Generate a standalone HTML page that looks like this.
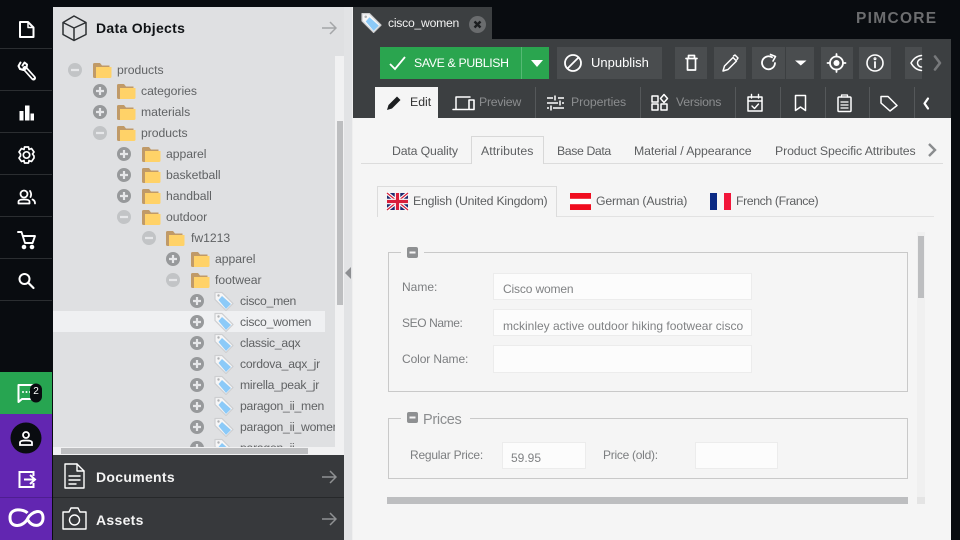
<!DOCTYPE html>
<html><head><meta charset="utf-8"><style>
html,body{margin:0;padding:0;width:960px;height:540px;overflow:hidden;background:#090c10;font-family:"Liberation Sans",sans-serif}
.a{position:absolute}
.t{position:absolute;white-space:nowrap;line-height:20px;height:20px;font-size:12px}
.r{color:#606264;font-size:12.2px;letter-spacing:-.03px}
.lf{letter-spacing:-.24px}
svg{position:absolute;overflow:visible}
.si{fill:none;stroke:#fff;stroke-width:2;stroke-linejoin:round;stroke-linecap:round}
.g{color:#8b8d8f}
.btn{position:absolute;top:47px;height:32px;background:#4a4d4f}
.dv{position:absolute;top:87px;width:1px;height:31px;background:#55585a}
.tb{fill:none;stroke:#fff;stroke-width:1.8;stroke-linecap:round;stroke-linejoin:round}
.c{color:#5d5f61;font-size:12.3px}
.l{color:#7c7e80;font-size:12px}
.inp{position:absolute;background:#fcfcfc;border:1px solid #ececec;box-sizing:border-box}
.v{color:#808284;font-size:12px}
</style></head><body>
<svg width="0" height="0" style="position:absolute"><defs>
<symbol id="f" viewBox="0 0 19 17" overflow="visible"><path d="M0 2.5Q0 1 1.5 1H7L9 3.5H16.5V6H3.5V16H1.5Q0 16 0 14.500Z" fill="#c09a68"/><path d="M3 5H18.500V14.500Q18.500 16 17 16H3Z" fill="#ffd268"/></symbol>
<symbol id="p" viewBox="0 0 14 14"><circle cx="7" cy="7" r="7" fill="#97999b"/><path d="M3 7H11M7 3V11" stroke="#e6e7e9" stroke-width="2.200"/></symbol>
<symbol id="m" viewBox="0 0 14 14"><circle cx="7" cy="7" r="7" fill="#c2c4c6"/><path d="M3 7H11" stroke="#e6e7e9" stroke-width="2.200"/></symbol>
<symbol id="g" viewBox="0 0 20 20"><path d="M1 1.500H8L19 12.500 12 19.500 1 8.500Z" fill="#f6f6f7" stroke="#cdced0" stroke-width="1.200" stroke-linejoin="round"/><path d="M8 5L17 13 12 18 4.500 9Z" fill="#8ccaf8"/><circle cx="4.500" cy="4.500" r="1.200" fill="#b0b2b4"/></symbol>
<symbol id="arr" viewBox="0 0 15 14"><path d="M0 7H14M8 1L14 7 8 13" fill="none" stroke="currentColor" stroke-width="1.500"/></symbol>
</defs></svg>

<!-- sidebar -->
<div class="a" style="left:0;top:0;width:52px;height:372px;background:#090c10"></div>
<div class="a" style="left:0;top:48px;width:52px;height:1px;background:#2b2e31"></div>
<div class="a" style="left:0;top:90px;width:52px;height:1px;background:#2b2e31"></div>
<div class="a" style="left:0;top:132px;width:52px;height:1px;background:#2b2e31"></div>
<div class="a" style="left:0;top:174px;width:52px;height:1px;background:#2b2e31"></div>
<div class="a" style="left:0;top:216px;width:52px;height:1px;background:#2b2e31"></div>
<div class="a" style="left:0;top:258px;width:52px;height:1px;background:#2b2e31"></div>
<div class="a" style="left:0;top:300px;width:52px;height:1px;background:#2b2e31"></div>
<svg class="si" style="left:0;top:0" width="53" height="300">
<path d="M20 22H28L33.500 27.500V37H20Z"/><path d="M28 22V27.500H33.500" stroke-width="1.500"/>
<path d="M25 68.500L33.500 78" stroke-width="5"/><path d="M25 68.500L33.500 78" stroke="#090c10" stroke-width="1.600" stroke-linecap="butt"/>
<path d="M20.500 62.500L18.500 66 20 69 23.500 70 26.500 68 27 64.500 24.500 62.500 22.500 65.500" stroke-width="2"/>
<rect x="19.500" y="111" width="4" height="9.500" fill="#fff" stroke="none"/><rect x="25" y="105.500" width="4.500" height="15" fill="#fff" stroke="none"/><rect x="30.500" y="113.500" width="3.500" height="7" fill="#fff" stroke="none"/>
<circle cx="26.500" cy="155" r="3.200" stroke-width="1.700"/><path d="M24.500 147H28.500L29 149.500 31.500 148.500 34 152 32.500 154 34 156 34 158 31.500 161.500 29 160.500 28.500 163H24.500L24 160.500 21.500 161.500 19 158 20.500 156V154L19 152 21.500 148.500 24 149.500Z" stroke-width="1.700"/>
<circle cx="24" cy="194" r="3.500" stroke-width="1.800"/><path d="M18.500 203.500V201.500Q18.500 199.500 24 199.500 29.500 199.500 29.500 201.500V203.500Z" stroke-width="1.800"/><path d="M30 191Q32 194 30.500 197M32.500 199.500Q35 200.500 35 203.500" stroke-width="1.800"/>
<path d="M18 232H21.500L25 243H32.500L35 236H23" stroke-width="1.900"/><circle cx="24" cy="247" r="1.300" fill="#fff"/><circle cx="32" cy="247" r="1.300" fill="#fff"/>
<circle cx="24.500" cy="279" r="5" stroke-width="2"/><path d="M28.500 283L33.500 288" stroke-width="2.200"/>
</svg>
<div class="a" style="left:0;top:372px;width:52px;height:42px;background:#27a551"></div>
<div class="a" style="left:0;top:414px;width:52px;height:126px;background:#6226b1"></div>
<div class="a" style="left:0;top:497px;width:52px;height:1px;background:#4f1e91"></div>
<svg style="left:0;top:372px" width="52" height="42"><path d="M18.500 13H34.500V27H22L18.500 30Z" fill="none" stroke="#fff" stroke-width="2" stroke-linejoin="round"/><circle cx="23" cy="20" r="1" fill="#fff"/><circle cx="26.500" cy="20" r="1" fill="#fff"/><circle cx="30" cy="20" r="1" fill="#fff"/><rect x="30" y="11.500" width="12" height="19" rx="6" fill="#090c10"/></svg>
<div class="t" style="left:30px;top:382px;width:12px;text-align:center;color:#fff;font-size:10px">2</div>
<svg style="left:0;top:414px" width="52" height="126">
<circle cx="26" cy="24" r="15.500" fill="#090c10"/>
<circle cx="26" cy="21" r="3" fill="none" stroke="#fff" stroke-width="1.800"/><path d="M20 31V28.500Q20 26.500 26 26.500 32 26.500 32 28.500V31Z" fill="none" stroke="#fff" stroke-width="1.800"/>
<path d="M33.500 62V58H19.500V73H33.500V69" fill="none" stroke="#fff" stroke-width="2"/><path d="M24 65.500H34.500M30 61L35 65.500 30 70" fill="none" stroke="#fff" stroke-width="2"/>
<path d="M27.500 99C24 95 9.500 93 10 104 10 115 24 113 28 104 31 98 43 93 43 104 43 113 32 114 28 106" fill="none" stroke="#fff" stroke-width="3"/>
</svg>

<!-- left panel -->
<div class="a" style="left:53px;top:7px;width:291px;height:448px;background:#dfe0e2"></div>
<div class="a" style="left:344px;top:7px;width:8px;height:533px;background:#e2e3e5"></div>
<div class="a" style="left:352px;top:7px;width:1px;height:533px;background:#efefef"></div>
<svg style="left:344px;top:266px" width="9" height="14"><path d="M7 1V13L1 7Z" fill="#8d8f92"/></svg>
<svg style="left:62px;top:15px" width="26" height="26" fill="none" stroke="#2d3033" stroke-width="1.500" stroke-linejoin="round"><path d="M12 1L24 7.500V19.500L12 25.500 1 19.500V7.500Z"/><path d="M1 7.500L12 13 24 7.500M12 13V25.500"/></svg>
<div class="t" style="left:96px;top:18px;font-size:14px;font-weight:700;color:#101316;letter-spacing:.3px">Data Objects</div>
<svg style="left:322px;top:21px;color:#a4a6a8" width="15" height="14"><use href="#arr"/></svg>

<div class="a" style="left:53px;top:311px;width:272px;height:21px;background:#eff0f2"></div>
<div class="a" style="left:53px;top:56px;width:282px;height:391px;overflow:hidden">
<svg style="left:15px;top:7px" width="14" height="14"><use href="#m"/></svg><svg style="left:40px;top:6px" width="19" height="17"><use href="#f"/></svg><div class="t r" style="left:64px;top:4px">products</div>
<svg style="left:40px;top:28px" width="14" height="14"><use href="#p"/></svg><svg style="left:64px;top:27px" width="19" height="17"><use href="#f"/></svg><div class="t r" style="left:88px;top:25px">categories</div>
<svg style="left:40px;top:49px" width="14" height="14"><use href="#p"/></svg><svg style="left:64px;top:48px" width="19" height="17"><use href="#f"/></svg><div class="t r" style="left:88px;top:46px">materials</div>
<svg style="left:40px;top:70px" width="14" height="14"><use href="#m"/></svg><svg style="left:64px;top:69px" width="19" height="17"><use href="#f"/></svg><div class="t r" style="left:88px;top:67px">products</div>
<svg style="left:64px;top:91px" width="14" height="14"><use href="#p"/></svg><svg style="left:89px;top:90px" width="19" height="17"><use href="#f"/></svg><div class="t r" style="left:113px;top:88px">apparel</div>
<svg style="left:64px;top:112px" width="14" height="14"><use href="#p"/></svg><svg style="left:89px;top:111px" width="19" height="17"><use href="#f"/></svg><div class="t r" style="left:113px;top:109px">basketball</div>
<svg style="left:64px;top:133px" width="14" height="14"><use href="#p"/></svg><svg style="left:89px;top:132px" width="19" height="17"><use href="#f"/></svg><div class="t r" style="left:113px;top:130px">handball</div>
<svg style="left:64px;top:154px" width="14" height="14"><use href="#m"/></svg><svg style="left:89px;top:153px" width="19" height="17"><use href="#f"/></svg><div class="t r" style="left:113px;top:151px">outdoor</div>
<svg style="left:89px;top:175px" width="14" height="14"><use href="#m"/></svg><svg style="left:113px;top:174px" width="19" height="17"><use href="#f"/></svg><div class="t r" style="left:138px;top:172px">fw1213</div>
<svg style="left:113px;top:196px" width="14" height="14"><use href="#p"/></svg><svg style="left:138px;top:195px" width="19" height="17"><use href="#f"/></svg><div class="t r" style="left:162px;top:193px">apparel</div>
<svg style="left:113px;top:217px" width="14" height="14"><use href="#m"/></svg><svg style="left:138px;top:216px" width="19" height="17"><use href="#f"/></svg><div class="t r" style="left:162px;top:214px">footwear</div>
<svg style="left:137px;top:238px" width="14" height="14"><use href="#p"/></svg><svg style="left:161px;top:235px" width="20" height="20"><use href="#g"/></svg><div class="t r lf" style="left:187px;top:235px">cisco_men</div>
<svg style="left:137px;top:259px" width="14" height="14"><use href="#p"/></svg><svg style="left:161px;top:256px" width="20" height="20"><use href="#g"/></svg><div class="t r lf" style="left:187px;top:256px">cisco_women</div>
<svg style="left:137px;top:280px" width="14" height="14"><use href="#p"/></svg><svg style="left:161px;top:277px" width="20" height="20"><use href="#g"/></svg><div class="t r lf" style="left:187px;top:277px">classic_aqx</div>
<svg style="left:137px;top:301px" width="14" height="14"><use href="#p"/></svg><svg style="left:161px;top:298px" width="20" height="20"><use href="#g"/></svg><div class="t r lf" style="left:187px;top:298px">cordova_aqx_jr</div>
<svg style="left:137px;top:322px" width="14" height="14"><use href="#p"/></svg><svg style="left:161px;top:319px" width="20" height="20"><use href="#g"/></svg><div class="t r lf" style="left:187px;top:319px">mirella_peak_jr</div>
<svg style="left:137px;top:343px" width="14" height="14"><use href="#p"/></svg><svg style="left:161px;top:340px" width="20" height="20"><use href="#g"/></svg><div class="t r lf" style="left:187px;top:340px">paragon_ii_men</div>
<svg style="left:137px;top:364px" width="14" height="14"><use href="#p"/></svg><svg style="left:161px;top:361px" width="20" height="20"><use href="#g"/></svg><div class="t r lf" style="left:187px;top:361px">paragon_ii_women</div>
<svg style="left:137px;top:385px" width="14" height="14"><use href="#p"/></svg><svg style="left:161px;top:382px" width="20" height="20"><use href="#g"/></svg><div class="t r lf" style="left:187px;top:382px">paragon_ii</div>
</div>
<div class="a" style="left:335px;top:56px;width:9px;height:391px;background:#f1f1f2"></div>
<div class="a" style="left:337px;top:121px;width:6px;height:184px;background:#bdbec0"></div>
<div class="a" style="left:53px;top:447px;width:291px;height:8px;background:#f1f1f2"></div>
<div class="a" style="left:61px;top:448px;width:247px;height:6px;background:#bdbec0"></div>

<div class="a" style="left:53px;top:455px;width:291px;height:85px;background:#37393c"></div>
<div class="a" style="left:53px;top:497px;width:291px;height:1px;background:#26282a"></div>
<svg style="left:64px;top:463px" width="21" height="26" fill="none" stroke="#fff" stroke-width="1.400" stroke-linejoin="round" stroke-linecap="round"><path d="M1 1H13L20 8V25H1Z"/><path d="M13 1V8H20M5 13H16M5 17H16M5 21H12"/></svg>
<div class="t" style="left:96px;top:467px;font-size:14px;font-weight:700;color:#f4f4f4;letter-spacing:.3px">Documents</div>
<svg style="left:322px;top:470px;color:#8f9193" width="15" height="14"><use href="#arr"/></svg>
<svg style="left:62px;top:507px" width="25" height="23" fill="none" stroke="#fff" stroke-width="1.400" stroke-linejoin="round"><path d="M1 5H7L9 1H16L18 5H24V22H1Z"/><circle cx="12.500" cy="13" r="5"/></svg>
<div class="t" style="left:96px;top:510px;font-size:14px;font-weight:700;color:#f4f4f4;letter-spacing:.3px">Assets</div>
<svg style="left:322px;top:512px;color:#8f9193" width="15" height="14"><use href="#arr"/></svg>

<!-- top -->
<div class="a" style="left:353px;top:7px;width:139px;height:32px;background:#3c3f41"></div>
<svg style="left:361px;top:12px" width="21" height="21"><use href="#g"/></svg>
<div class="t" style="left:388px;top:13px;color:#f2f2f2;font-size:12.200px;letter-spacing:-.25px">cisco_women</div>
<svg style="left:469px;top:16px" width="17" height="17"><circle cx="8.500" cy="8.500" r="8.500" fill="#6a6c6e"/><path d="M5.500 5.500L11.500 11.500M11.500 5.500L5.500 11.500" stroke="#1c1e20" stroke-width="2.400"/></svg>
<div class="t" style="left:856px;top:9px;color:#6c6d6f;font-size:15.500px;font-weight:700;letter-spacing:1.300px">PIMCORE</div>

<div class="a" style="left:353px;top:39px;width:598px;height:79px;background:#3c3f41"></div>
<div class="a" style="left:380px;top:47px;width:169px;height:32px;background:#2aa54f"></div>
<div class="a" style="left:521px;top:47px;width:1px;height:32px;background:#55b974"></div>
<svg style="left:389px;top:55px" width="17" height="16" fill="none" stroke="#fff" stroke-width="1.800"><path d="M1 9L6 14 16 2"/></svg>
<div class="t" style="left:414px;top:53px;color:#fff;font-size:12.300px;letter-spacing:-.35px">SAVE &amp; PUBLISH</div>
<svg style="left:531px;top:60px" width="12" height="7"><path d="M0 0H12L6 7Z" fill="#fff"/></svg>
<div class="btn" style="left:557px;width:105px"></div>
<svg style="left:564px;top:54px" width="18" height="18" fill="none" stroke="#fff" stroke-width="1.800"><circle cx="9" cy="9" r="8"/><path d="M3.500 14.500L14.500 3.500"/></svg>
<div class="t" style="left:591px;top:53px;color:#fff;font-size:13px">Unpublish</div>
<div class="btn" style="left:675px;width:32px"></div>
<div class="btn" style="left:714px;width:32px"></div>
<div class="btn" style="left:752px;width:33px"></div>
<div class="btn" style="left:786px;width:28px"></div>
<div class="btn" style="left:821px;width:32px"></div>
<div class="btn" style="left:859px;width:32px"></div>
<div class="btn" style="left:905px;width:17px"></div>
<svg style="left:0;top:0" width="960" height="118" class="tb">
<path d="M686 58.500H697M688.500 58.500V55.500H694.500V58.500M687.500 59V70H695.500V59" stroke-width="1.700"/>
<path d="M723 71L724.500 66 733 57.500 736.500 61 728 69.500Z" stroke-width="1.500"/><path d="M733.500 56L735 55 738 58 737 59.500" stroke-width="1.500"/>
<path d="M775 63A6.500 6.500 0 1 1 772 57.300" stroke-width="1.800"/><path d="M770.500 54.500L775.500 56.500 773 61" stroke-width="1.600"/>
<path d="M795 60.500H806.500L800.800 65.500Z" fill="#fff" stroke="none"/>
<circle cx="836.500" cy="63" r="6.500"/><circle cx="836.500" cy="63" r="3" fill="#fff" stroke="none"/><path d="M836.500 54V56.500M836.500 69.500V72M827.500 63H830M843 63H845.500"/>
<circle cx="875" cy="63" r="8" stroke-width="1.600"/><path d="M875 62V67.500" stroke-width="1.800"/><circle cx="875" cy="58.700" r=".6"/>
<path d="M911 63Q915 56 921.500 55.500M911 63Q915 70 921.500 70.500M921.500 59A4 4 0 0 0 921.500 67" stroke-width="1.500"/>
<path d="M935 56.500L940 63 935 69.500" stroke="#77797b" stroke-width="2.600"/>
<path d="M387 109.500L388.500 104.500 397 96 400.500 99.500 392 108Z" fill="#1c1e20" stroke="#1c1e20" stroke-width="1.400"/>
<path d="M456 109V97H470M453 109.500H468" stroke-width="1.500"/><rect x="469" y="100" width="5" height="9.500" stroke-width="1.600"/>
<path d="M547 98H553M558 98H564M547 103H558M562 103H564M547 108H549M553 108H564M555 95.500V100.500M560 100.500V105.500M551 105.500V110.500" stroke-width="1.500" stroke-linecap="butt"/>
<rect x="652" y="96" width="6" height="6" stroke-width="1.500"/><rect x="652" y="104" width="6" height="6" stroke-width="1.500"/><rect x="661" y="104" width="6" height="6" stroke-width="1.500"/><path d="M664 94.500L667.500 98.500 664 102.500 660.500 98.500Z" stroke-width="1.500"/>
<rect x="748" y="97" width="14" height="14" stroke-width="1.500"/><path d="M748 101H762M751.500 94.500V98M758.500 94.500V98M752 106L754.500 108.500 758.500 104" stroke-width="1.400"/>
<path d="M795.500 95.500H805.500V110.500L800.500 107 795.500 110.500Z" stroke-width="1.500"/>
<rect x="838" y="97" width="13" height="14.500" rx="1" stroke-width="1.500"/><path d="M841.500 97V95H847.500V97M841 102H848M841 105H848M841 108H848" stroke-width="1.300"/>
<path d="M881 96.500H888L897 105.500 890 111 881 103Z" stroke-width="1.500"/>
<path d="M928 98.500L924.500 103.500 928 108.500" stroke-width="2.200"/>
</svg>
<div class="a" style="left:375px;top:87px;width:63px;height:31px;background:#f5f5f5"></div>
<svg style="left:385px;top:94px" width="18" height="18"><path d="M2 16L3.500 11 12 2.500 15.500 6 7 14.500Z" fill="#1c1e20"/></svg>
<div class="t" style="left:410px;top:92px;color:#333;font-size:12.300px">Edit</div>
<div class="dv" style="left:535px"></div><div class="dv" style="left:640px"></div><div class="dv" style="left:735px"></div><div class="dv" style="left:780px"></div><div class="dv" style="left:825px"></div><div class="dv" style="left:869px"></div><div class="dv" style="left:914px"></div>
<div class="t g" style="left:479px;top:92px;font-size:12.300px;letter-spacing:-.25px">Preview</div>
<div class="t g" style="left:571px;top:92px;font-size:12.300px;letter-spacing:-.1px">Properties</div>
<div class="t g" style="left:676px;top:92px;font-size:12.300px;letter-spacing:-.25px">Versions</div>

<!-- content -->
<div class="a" style="left:353px;top:118px;width:598px;height:422px;background:#f5f5f5"></div>
<div class="a" style="left:361px;top:163px;width:582px;height:1px;background:#dcdcdc"></div>
<div class="a" style="left:471px;top:136px;width:73px;height:28px;box-sizing:border-box;background:#f5f5f5;border:1px solid #d8d8d8;border-bottom:0"></div>
<div class="t c" style="left:392px;top:141px;letter-spacing:-.15px">Data Quality</div>
<div class="t c" style="left:481px;top:141px;letter-spacing:.05px">Attributes</div>
<div class="t c" style="left:557px;top:141px;letter-spacing:-.4px">Base Data</div>
<div class="t c" style="left:634px;top:141px;letter-spacing:-.1px">Material / Appearance</div>
<div class="t c" style="left:775px;top:141px;letter-spacing:-.11px">Product Specific Attributes</div>
<svg style="left:928px;top:143px" width="9" height="14" fill="none" stroke="#8a8c8e" stroke-width="2.400"><path d="M1 1L7 7 1 13"/></svg>

<div class="a" style="left:377px;top:216px;width:557px;height:1px;background:#e2e2e2"></div>
<div class="a" style="left:377px;top:186px;width:180px;height:31px;box-sizing:border-box;background:#f5f5f5;border:1px solid #dcdcdc;border-bottom:0"></div>
<svg style="left:387px;top:193px" width="21" height="17" viewBox="0 0 21 17"><rect width="21" height="17" fill="#1f2a6e"/><path d="M0 0L21 17M21 0L0 17" stroke="#fff" stroke-width="3.400"/><path d="M0 0L21 17M21 0L0 17" stroke="#d81e3a" stroke-width="1.200"/><path d="M10.500 0V17M0 8.500H21" stroke="#fff" stroke-width="5.500"/><path d="M10.500 0V17M0 8.500H21" stroke="#d81e3a" stroke-width="3.200"/></svg>
<div class="t c" style="left:413px;top:191px;letter-spacing:-.21px">English (United Kingdom)</div>
<svg style="left:570px;top:193px" width="21" height="17"><rect width="21" height="17" fill="#f00d1f"/><rect y="5.800" width="21" height="5.400" fill="#fff"/></svg>
<div class="t c" style="left:596px;top:191px;letter-spacing:-.2px">German (Austria)</div>
<svg style="left:710px;top:193px" width="21" height="17"><rect width="7" height="17" fill="#0b2a84"/><rect x="7" width="7" height="17" fill="#f7f7f7"/><rect x="14" width="7" height="17" fill="#f2163a"/></svg>
<div class="t c" style="left:736px;top:191px;letter-spacing:-.4px">French (France)</div>

<div class="a" style="left:388px;top:252px;width:520px;height:140px;box-sizing:border-box;border:1px solid #c9c9c9"></div>
<div class="a" style="left:401px;top:247px;width:23px;height:10px;background:#f5f5f5"></div>
<svg style="left:407px;top:247px" width="11" height="11"><rect width="11" height="11" rx="2" fill="#8e9092"/><rect x="2.500" y="4.500" width="6" height="2" fill="#f5f5f5"/></svg>
<div class="t l" style="left:402px;top:277px">Name:</div>
<div class="t l" style="left:402px;top:313px;letter-spacing:-.4px">SEO Name:</div>
<div class="t l" style="left:402px;top:349px;letter-spacing:-.1px">Color Name:</div>
<div class="inp" style="left:493px;top:273px;width:259px;height:27px"></div>
<div class="inp" style="left:493px;top:309px;width:259px;height:27px"></div>
<div class="inp" style="left:493px;top:345px;width:259px;height:28px"></div>
<div class="t v" style="left:503px;top:279px;letter-spacing:-.15px">Cisco women</div>
<div class="t v" style="left:503px;top:316px;width:240px;overflow:hidden">mckinley active outdoor hiking footwear cisco</div>

<div class="a" style="left:388px;top:418px;width:520px;height:61px;box-sizing:border-box;border:1px solid #c9c9c9"></div>
<div class="a" style="left:401px;top:410px;width:69px;height:16px;background:#f5f5f5"></div>
<svg style="left:407px;top:412px" width="11" height="11"><rect width="11" height="11" rx="2" fill="#8e9092"/><rect x="2.500" y="4.500" width="6" height="2" fill="#f5f5f5"/></svg>
<div class="t" style="left:423px;top:410px;font-size:14.500px;color:#8b8d8f;letter-spacing:-.3px">Prices</div>
<div class="t l" style="left:410px;top:445px;letter-spacing:-.22px">Regular Price:</div>
<div class="t l" style="left:603px;top:445px;letter-spacing:-.27px">Price (old):</div>
<div class="inp" style="left:502px;top:442px;width:84px;height:27px"></div>
<div class="inp" style="left:695px;top:442px;width:83px;height:27px"></div>
<div class="t v" style="left:511px;top:448px">59.95</div>

<div class="a" style="left:917px;top:232px;width:8px;height:265px;background:#f0f0f0"></div>
<div class="a" style="left:918px;top:236px;width:6px;height:62px;background:#bdbec0"></div>
<div class="a" style="left:387px;top:497px;width:521px;height:7px;background:#bdbec0"></div>
<div class="a" style="left:917px;top:497px;width:8px;height:7px;background:#e4e4e4"></div>
</body></html>
